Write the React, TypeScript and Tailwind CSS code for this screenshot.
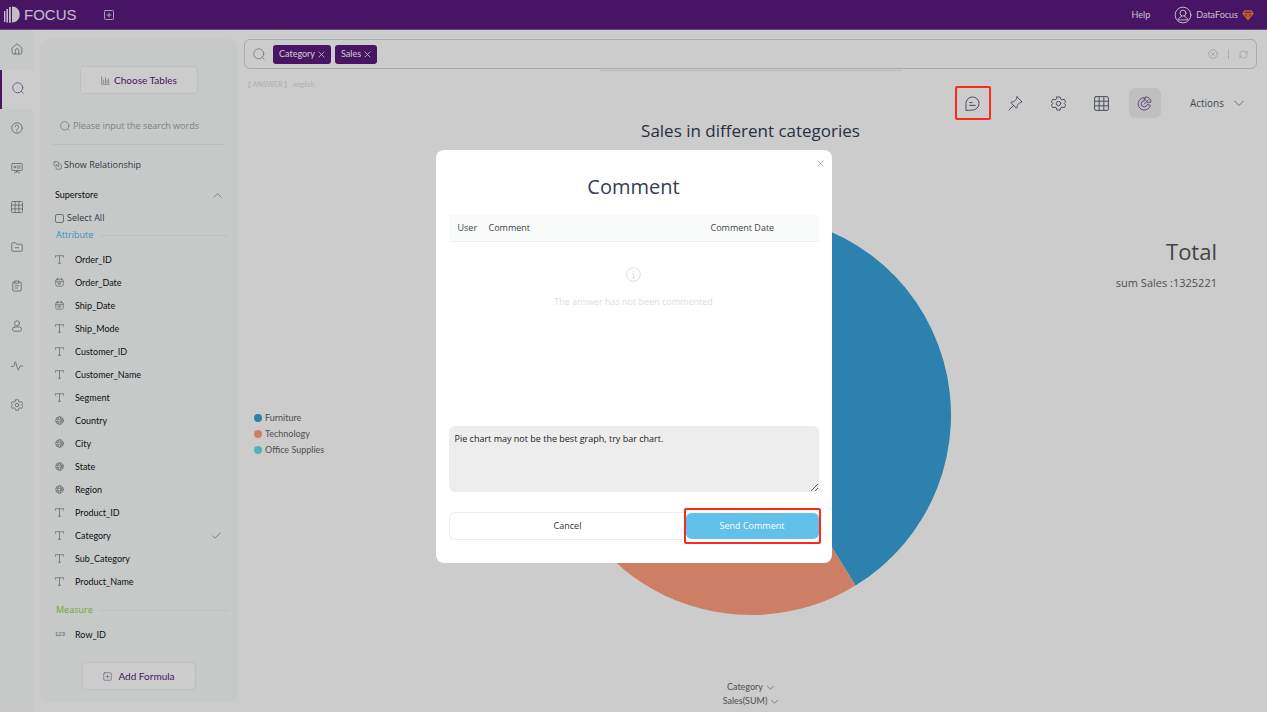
import { type ReactNode, useState } from "react";
import { clsx } from "clsx";

type FieldKind = "text" | "date" | "geo" | "number";

type Field = { name: string; kind: FieldKind; checked?: boolean };

const ATTRIBUTES: Field[] = [
  { name: "Order_ID", kind: "text" },
  { name: "Order_Date", kind: "date" },
  { name: "Ship_Date", kind: "date" },
  { name: "Ship_Mode", kind: "text" },
  { name: "Customer_ID", kind: "text" },
  { name: "Customer_Name", kind: "text" },
  { name: "Segment", kind: "text" },
  { name: "Country", kind: "geo" },
  { name: "City", kind: "geo" },
  { name: "State", kind: "geo" },
  { name: "Region", kind: "geo" },
  { name: "Product_ID", kind: "text" },
  { name: "Category", kind: "text", checked: true },
  { name: "Sub_Category", kind: "text" },
  { name: "Product_Name", kind: "text" },
];

const MEASURES: Field[] = [{ name: "Row_ID", kind: "number" }];

// start and end are degrees, clockwise from the top
const SLICES = [
  { label: "Furniture", fill: "#37a2da", dot: "bg-[#37a2da]", start: 0, end: 148.5 },
  { label: "Technology", fill: "#ff9f7f", dot: "bg-[#ff9f7f]", start: 148.5, end: 262 },
  { label: "Office Supplies", fill: "#67e0e3", dot: "bg-[#67e0e3]", start: 262, end: 360 },
];

const QUERY_WORDS = ["Category", "Sales"];

function slicePath(start: number, end: number, r = 200): string {
  const point = (deg: number) => {
    const a = (deg * Math.PI) / 180;
    return `${(r + r * Math.sin(a)).toFixed(2)} ${(r - r * Math.cos(a)).toFixed(2)}`;
  };
  return `M${r} ${r}L${point(start)}A${r} ${r} 0 ${end - start > 180 ? 1 : 0} 1 ${point(end)}Z`;
}

export default function App() {
  const [open, setOpen] = useState(true);

  return (
    <div className="flex min-h-screen flex-col bg-white font-['Open_Sans','Noto_Sans','Noto_Sans_CJK_SC',sans-serif] text-[9px] text-[#3c4658]">
      <Header />
      <div className="flex flex-1">
        <Rail />
        <FieldPanel />
        <main className="flex min-w-0 flex-1 flex-col pt-[9px] pr-[10px] pl-[7px]">
          <SearchBar />
          <Toolbar onComment={() => setOpen(true)} />
          <Chart />
        </main>
      </div>
      {open && <CommentDialog onClose={() => setOpen(false)} />}
    </div>
  );
}

function Header() {
  return (
    <header className="flex h-[30px] items-center border-b border-[#8a5da3] bg-[#5b197d] pr-[13px] pl-1 text-[#f4eef7]">
      <a href="#home" className="flex items-center gap-1">
        <svg viewBox="0 0 16 17" className="h-[17px] w-4" fill="currentColor">
          <path d="M0 5h1.4v11H0zM2.4 3H4v13.5H2.4zM5 1h1.8v15.7H5zM8 .5c4.6 0 7.7 3.5 7.7 8s-3.1 8-7.7 8z" />
        </svg>
        <span className="font-['Liberation_Sans',sans-serif] text-[15px] leading-5">FOCUS</span>
      </a>
      <button type="button" aria-label="New" className="ml-[26px]">
        <Icon className="h-3 w-3" stroke={1.6}>
          <rect x="3" y="3" width="18" height="18" rx="2" />
          <path d="M12 8v8M8 12h8" />
        </Icon>
      </button>
      <nav className="ml-auto flex items-center font-['Lato',sans-serif] text-[9px]">
        <a href="#help">Help</a>
        <a href="#account" className="ml-6 flex items-center">
          <Icon className="h-[18px] w-[18px]" stroke={1.3}>
            <circle cx="12" cy="12" r="10.5" />
            <circle cx="12" cy="9.5" r="4" />
            <path d="M5.5 18.5c.5-3 3-4 4.5-4.2M18.5 18.5c-.5-3-3-4-4.5-4.2M6.5 18.5h11" />
          </Icon>
          <span className="ml-1">DataFocus</span>
          <Icon className="ml-1 h-3 w-3 text-[#f0812f]" stroke={2.6}>
            <path d="M5 4h14l3 5-10 12L2 9zM2 9h20M9.5 10l2.5 7 2.5-7" />
          </Icon>
        </a>
      </nav>
    </header>
  );
}

function Rail() {
  return (
    <nav className="w-[33px] shrink-0 bg-[#f9fcfb] text-[#7b7f86]">
      <ul className="grid h-[396px] grid-rows-10">
        <RailItem label="Home">
          <path d="M2.5 9.5L12 1.5l9.5 8V20a2 2 0 0 1-2 2h-15a2 2 0 0 1-2-2zM8.5 22v-7a3.5 3.5 0 0 1 7 0v7" />
        </RailItem>
        <RailItem label="Search" active>
          <SearchShape />
        </RailItem>
        <RailItem label="Help">
          <circle cx="12" cy="12" r="10.5" />
          <path d="M8.5 9.5a3.5 3.5 0 1 1 5 3.2c-1 .6-1.5 1-1.5 2.3M12 17v1.5" />
        </RailItem>
        <RailItem label="Boards">
          <rect x="1.5" y="3" width="21" height="14" rx="1.5" />
          <path d="M12 17v3M7 22l5-3 5 3M12.5 8h6M12.5 12h6" />
          <circle cx="7.5" cy="10" r="2" />
        </RailItem>
        <RailItem label="Tables">
          <GridShape />
        </RailItem>
        <RailItem label="Resources">
          <path d="M1.5 5A1.5 1.5 0 0 1 3 3.5h6l2.5 3H21A1.5 1.5 0 0 1 22.5 8v11a1.5 1.5 0 0 1-1.5 1.5H3A1.5 1.5 0 0 1 1.5 19zM8.5 13.5h7" />
        </RailItem>
        <RailItem label="Tasks">
          <path d="M8 4H5a1.5 1.5 0 0 0-1.5 1.5v15A1.5 1.5 0 0 0 5 22h14a1.5 1.5 0 0 0 1.5-1.5v-15A1.5 1.5 0 0 0 19 4h-3M8 2h8v4.5H8zM8 11.5h8M8 16h5" />
        </RailItem>
        <RailItem label="Users">
          <circle cx="12" cy="6.5" r="5" />
          <rect x="3" y="14" width="18" height="8.5" rx="4.2" />
        </RailItem>
        <RailItem label="Monitor">
          <path d="M1 13h3c1.5 0 2-1 2.5-3l1-5c.4-2 1.6-2 2 0l4 14c.5 2 1.6 2 2 0l1.5-5c.5-1.5 1-2 2.5-2H23" />
        </RailItem>
        <RailItem label="Settings">
          <GearShape />
        </RailItem>
      </ul>
    </nav>
  );
}

function RailItem({
  label,
  active,
  children,
}: {
  label: string;
  active?: boolean;
  children: ReactNode;
}) {
  return (
    <li className="flex">
      <a
        href={`#${label.toLowerCase()}`}
        aria-label={label}
        className={clsx(
          "flex flex-1 items-center justify-center pb-[2px]",
          active && "border-l-2 border-[#5b197d] bg-white text-[#7d5c92]",
        )}
      >
        <Icon className="h-3 w-3" stroke={1.6}>
          {children}
        </Icon>
      </a>
    </li>
  );
}

function FieldPanel() {
  return (
    <aside className="mt-[9px] mb-[9px] ml-[7px] flex w-[197px] shrink-0 flex-col rounded-lg bg-[#f9fcfb] pr-2 pl-[13px]">
      <button
        type="button"
        className="mt-[27px] ml-[27px] flex h-7 w-[118px] items-center justify-center gap-1 rounded border border-[#ebeff3] bg-white font-['Lato',sans-serif] text-[10px] text-[#5b197d]"
      >
        <Icon className="h-[9px] w-[9px] text-[#8c7a98]" stroke={1.8}>
          <path d="M2 2v20h20M7 18v-7M12 18V5M16 18v-5M20 18V8" />
        </Icon>
        Choose Tables
      </button>

      <label className="mt-[14px] flex h-[37px] w-[172px] items-center gap-[3px] border-b border-[#e9edee] pl-[7px] text-[#83868c]">
        <Icon className="h-[10px] w-[10px]" stroke={1.6}>
          <SearchShape />
        </Icon>
        <input
          type="text"
          aria-label="Search fields"
          placeholder="Please input the search words"
          className="min-w-0 flex-1 bg-transparent outline-none placeholder:text-[#a2a4a9]"
        />
      </label>

      <button type="button" className="mt-3 flex h-4 items-center gap-[2px] text-[#3f4756]">
        <Icon className="h-[9px] w-[9px] text-[#777c86]" stroke={1.8}>
          <rect x="2" y="2" width="13" height="11" rx="3" />
          <path d="M18 8h1a3 3 0 0 1 3 3v8a3 3 0 0 1-3 3h-8a3 3 0 0 1-3-3v-2M8 8l8 8" />
        </Icon>
        Show Relationship
      </button>

      <button
        type="button"
        className="mt-[14px] flex h-4 items-center justify-between pr-[7px] pl-[2px] font-['Lato',sans-serif] text-[9px] text-[#0d0d12]"
      >
        Superstore
        <Icon className="h-[9px] w-[9px] text-[#777]" stroke={1.6}>
          <path d="M2 17L12 7l10 10" />
        </Icon>
      </button>
      <label className="mt-[7px] flex h-4 items-center gap-[3px] pl-[2px]">
        <input
          type="checkbox"
          className="h-[9px] w-[9px] appearance-none rounded-[2px] border border-[#8b8f96]"
        />
        Select All
      </label>

      <GroupTitle label="Attribute" tone="text-[#4cb4e7]" />
      <ul className="mt-1">
        {ATTRIBUTES.map((f) => (
          <FieldRow key={f.name} field={f} />
        ))}
      </ul>
      <div className="mt-2">
        <GroupTitle label="Measure" tone="text-[#8fd13f]" />
      </div>
      <ul className="mt-1">
        {MEASURES.map((f) => (
          <FieldRow key={f.name} field={f} />
        ))}
      </ul>

      <button
        type="button"
        className="mt-4 mb-[13px] ml-[29px] flex h-7 w-[114px] items-center justify-center gap-[6px] rounded border border-[#ebeff3] bg-white font-['Lato',sans-serif] text-[10px] text-[#5b197d]"
      >
        <Icon className="h-[9px] w-[9px] text-[#8c7a98]" stroke={1.8}>
          <rect x="2" y="2" width="20" height="20" rx="2" />
          <path d="M12 8v8M8 12h8" />
        </Icon>
        Add Formula
      </button>
    </aside>
  );
}

function GroupTitle({ label, tone }: { label: string; tone: string }) {
  return (
    <h3 className={clsx("flex h-[18px] items-center gap-[6px] pl-[3px]", tone)}>
      {label}
      <span className="h-px flex-1 bg-[#edf0f0]" />
    </h3>
  );
}

function FieldRow({ field }: { field: Field }) {
  return (
    <li className="flex h-[23px] items-center pr-2 pl-[2px] font-['Lato',sans-serif] text-[9px] text-[#12131a]">
      <span className="flex w-5 text-[#75797f]">
        <FieldIcon kind={field.kind} />
      </span>
      {field.name}
      {field.checked && (
        <Icon className="ml-auto h-[9px] w-[9px] text-[#777]" stroke={1.8}>
          <path d="M2 13l6 6L22 5" />
        </Icon>
      )}
    </li>
  );
}

function FieldIcon({ kind }: { kind: FieldKind }) {
  if (kind === "number") {
    return <span className="font-['Liberation_Sans',sans-serif] text-[6px]">123</span>;
  }
  return (
    <Icon className="h-[9px] w-[9px]" stroke={1.8}>
      {kind === "text" && <path d="M1 6V2h22v4M12 2v20M9 22h6" />}
      {kind === "date" && (
        <>
          <rect x="2" y="3" width="20" height="19" rx="4" />
          <path d="M2 9h20M7 1v4M17 1v4M8 13h8l-4 5z" />
        </>
      )}
      {kind === "geo" && (
        <>
          <circle cx="12" cy="12" r="10" />
          <ellipse cx="12" cy="12" rx="4.5" ry="10" />
          <path d="M3 8.5h18M3 15.5h18" />
        </>
      )}
    </Icon>
  );
}

function SearchBar() {
  return (
    <div className="flex h-[30px] items-center rounded-md border border-[#ccd6e6] px-2">
      <Icon className="h-3 w-3 text-[#8a91a0]" stroke={1.6}>
        <SearchShape />
      </Icon>
      <div className="ml-2 flex gap-1">
        {QUERY_WORDS.map((word) => (
          <span
            key={word}
            className="flex h-[19px] items-center gap-[3px] rounded-[3px] bg-[#5b197d] px-[6px] font-['Lato',sans-serif] text-[9px] text-white"
          >
            {word}
            <button type="button" aria-label={`Remove ${word}`}>
              <Icon className="h-[7px] w-[7px]" stroke={2.6}>
                <path d="M3 3l18 18M21 3L3 21" />
              </Icon>
            </button>
          </span>
        ))}
      </div>
      <input type="text" aria-label="Query" className="min-w-0 flex-1 bg-transparent outline-none" />
      <button type="button" aria-label="Clear" className="text-[#c3c6ca]">
        <Icon className="h-[10px] w-[10px]" stroke={1.8}>
          <circle cx="12" cy="12" r="10.5" />
          <path d="M8 8l8 8M16 8l-8 8" />
        </Icon>
      </button>
      <span className="mx-[10px] h-[10px] w-px bg-[#d6d8dc]" />
      <button type="button" aria-label="Refresh" className="text-[#c3c6ca]">
        <Icon className="h-[9px] w-[9px]" stroke={1.8}>
          <path d="M2.5 13v-3a7 7 0 0 1 7-7H14a7 7 0 0 1 6.5 4.5M21.5 11v3a7 7 0 0 1-7 7H10a7 7 0 0 1-6.5-4.5M21.5 3v5h-4M2.5 21v-5h4" />
        </Icon>
      </button>
    </div>
  );
}

function Toolbar({ onComment }: { onComment: () => void }) {
  return (
    <div className="grid h-[51px] grid-cols-[1fr_auto_1fr]">
      <p className="mt-[10px] font-['Lato','Noto_Sans_CJK_SC',sans-serif] text-[7px] text-[#dcdcdf]">
        【 ANSWER 】 english
      </p>
      <span className="mt-px h-px w-[302px] bg-[#e6e8ec]" />
      <div className="mt-[18px] flex h-8 items-center justify-end gap-[11px] pr-[13px] text-[#545c6e]">
        <ToolButton label="Comments" onClick={onComment} highlighted>
          <path d="M1.5 22.5V12A10.5 10.5 0 1 1 12 22.500zM7.5 10.5h4M7.5 15h9" />
        </ToolButton>
        <ToolButton label="Pin">
          <path d="M14.5 1.5l8 8c-1.5 1-3 .8-4 1.5l-3 3c-.8 1-.5 4-2 5.5l-9-9c1.5-1.5 4.5-1.2 5.5-2l3-3c.7-1 .5-2.5 1.500-4zM9 15l-7.5 7.5" />
        </ToolButton>
        <ToolButton label="Settings">
          <GearShape />
        </ToolButton>
        <ToolButton label="Table view">
          <GridShape />
        </ToolButton>
        <ToolButton label="Chart view" active>
          <path d="M11 2.5A10 10 0 1 0 21.5 15l-5-1.5a5 5 0 1 1-5.5-6z" />
          <path d="M14.5 1.5a9 9 0 0 1 8 8l-5 1.5-4.500-5z" />
          <path d="M11.5 13l7-7" />
        </ToolButton>
        <button type="button" className="ml-[18px] flex items-center gap-[10px] text-[10px]">
          Actions
          <Icon className="h-[10px] w-[10px]" stroke={1.8}>
            <path d="M1 7l11 11L23 7" />
          </Icon>
        </button>
      </div>
    </div>
  );
}

function ToolButton({
  label,
  active,
  highlighted,
  onClick,
  children,
}: {
  label: string;
  active?: boolean;
  highlighted?: boolean;
  onClick?: () => void;
  children: ReactNode;
}) {
  return (
    <button
      type="button"
      aria-label={label}
      onClick={onClick}
      className={clsx(
        "relative flex h-[30px] w-8 shrink-0 items-center justify-center rounded-md",
        active && "bg-[#eef1f1] text-[#75528c]",
      )}
    >
      <Icon className="h-[15px] w-[15px]" stroke={1.5}>
        {children}
      </Icon>
      {highlighted && (
        <span className="absolute -inset-[2px] z-50 rounded-[2px] border-2 border-[#fb2a1c]" />
      )}
    </button>
  );
}

function Chart() {
  return (
    <section className="flex flex-1 flex-col text-[#666]">
      <h2 className="h-[22px] text-center text-[17px] leading-[22px] text-[#333c55]">
        Sales in different categories
      </h2>
      <div className="grid flex-1 grid-cols-[1fr_auto_1fr] items-center">
        <ul className="mt-[46px] ml-[10px] font-['Lato',sans-serif]">
          {SLICES.map((s) => (
            <li key={s.label} className="flex h-4 items-center gap-[3px]">
              <span className={clsx("h-2 w-2 rounded-full", s.dot)} />
              {s.label}
            </li>
          ))}
        </ul>
        <svg viewBox="0 0 400 400" className="mt-2 h-[400px] w-[400px]" role="img" aria-label="Sales by category">
          {SLICES.map((s) => (
            <path key={s.label} d={slicePath(s.start, s.end)} fill={s.fill} />
          ))}
        </svg>
        <div className="mt-[93px] self-start pr-10 text-right">
          <p className="text-[22px] leading-8 text-[#555]">Total</p>
          <p className="mt-2 text-[11px] leading-4">sum Sales :1325221</p>
        </div>
      </div>
      <div className="flex flex-col items-center pb-1">
        <AxisButton label="Category" />
        <AxisButton label="Sales(SUM)" />
      </div>
    </section>
  );
}

function AxisButton({ label }: { label: string }) {
  return (
    <button
      type="button"
      className="flex h-[14px] items-center gap-1 font-['Lato',sans-serif] text-[9px]"
    >
      {label}
      <Icon className="h-[7px] w-[7px]" stroke={2}>
        <path d="M1 7l11 11L23 7" />
      </Icon>
    </button>
  );
}

function CommentDialog({ onClose }: { onClose: () => void }) {
  const [comment, setComment] = useState("Pie chart may not be the best graph, try bar chart.");

  return (
    <div className="fixed inset-0 z-40 flex items-center justify-center bg-black/20">
      <div
        role="dialog"
        aria-modal="true"
        aria-labelledby="comment-title"
        className="flex w-[396px] flex-col rounded-lg bg-white px-[13px] pb-[23px]"
      >
        <button
          type="button"
          aria-label="Close"
          onClick={onClose}
          className="mt-[6px] -mr-[9px] self-end p-1"
        >
          <Icon className="h-[7px] w-[7px] text-[#888d99]" stroke={2.4}>
            <path d="M3 3l18 18M21 3L3 21" />
          </Icon>
        </button>
        <h2 id="comment-title" className="mt-[2px] text-center text-[20px] leading-7 text-[#344055]">
          Comment
        </h2>

        <table className="mt-[14px] w-full table-fixed text-left text-[#444]">
          <thead>
            <tr className="h-[27px] border-b border-[#eff1f1] bg-[#f9fbfb]">
              <th className="w-10 pl-[9px] font-normal">User</th>
              <th className="w-[222px] font-normal">Comment</th>
              <th className="font-normal">Comment Date</th>
            </tr>
          </thead>
          <tbody>
            <tr>
              <td colSpan={3} className="h-[184px] pt-[25px] text-center align-top text-[#dedede]">
                <Icon className="mx-auto h-[15px] w-[15px]" stroke={1.5}>
                  <circle cx="12" cy="12" r="11" />
                  <path d="M12 6v1.5M10.5 10H12v7.5M10 17.5h4" />
                </Icon>
                <p className="mt-[13px]">The answer has not been commented</p>
              </td>
            </tr>
          </tbody>
        </table>

        <textarea
          aria-label="Comment"
          value={comment}
          onChange={(e) => setComment(e.target.value)}
          className="block h-[66px] w-full rounded-md bg-[#ededed] px-[6px] py-[6px] text-[9px] leading-[13px] text-[#222] outline-none"
        />

        <div className="mt-5 flex">
          <button
            type="button"
            onClick={onClose}
            className="h-7 flex-1 rounded-l-md border border-r-0 border-[#ececf2] text-[#333]"
          >
            Cancel
          </button>
          <button
            type="button"
            className="relative h-7 w-[133px] rounded-md border-y border-white bg-[#62c1eb] text-white"
          >
            Send Comment
            <span className="absolute -inset-x-[2px] -inset-y-[5px] rounded-[2px] border-2 border-[#fb2a1c]" />
          </button>
        </div>
      </div>
    </div>
  );
}

function Icon({
  className,
  stroke,
  children,
}: {
  className: string;
  stroke: number;
  children: ReactNode;
}) {
  return (
    <svg
      viewBox="0 0 24 24"
      className={clsx("shrink-0", className)}
      fill="none"
      stroke="currentColor"
      strokeWidth={stroke}
      strokeLinecap="round"
      strokeLinejoin="round"
      aria-hidden="true"
    >
      {children}
    </svg>
  );
}

function SearchShape() {
  return (
    <>
      <circle cx="11.5" cy="11.5" r="10" />
      <path d="M19 19l3.5 3.5" />
    </>
  );
}

function GridShape() {
  return (
    <>
      <rect x="1" y="1" width="22" height="22" rx="2" />
      <path d="M8.3 1v22M15.7 1v22M1 8.3h22M1 15.7h22" />
    </>
  );
}

function GearShape() {
  return (
    <>
      <path d="M9.5 1.5h5l1 3.5 2.2 1.2 3.5-.9 2.3 4L21 12l2.5 2.7-2.3 4-3.5-.9-2.2 1.2-1 3.5h-5l-1-3.5-2.2-1.2-3.5.9-2.3-4L3 12 .5 9.3l2.3-4 3.5.9L8.5 5z" />
      <circle cx="12" cy="12" r="3.5" />
    </>
  );
}
